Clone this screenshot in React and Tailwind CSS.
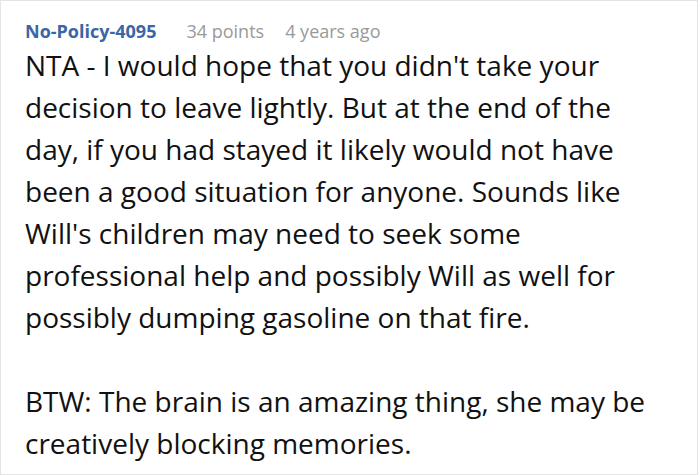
import React from 'react';

export default function App() {
  return (
    <div className="w-[698px] h-[475px] bg-white border border-[#e4e4e4] overflow-hidden" style={{ fontFamily: '"Open Sans", "Noto Sans", sans-serif' }}>
      <div className="pl-[24px] pr-4 pt-[17px]">
        <div className="flex items-baseline text-[18px] leading-[26px]">
          <span className="font-bold text-[#3b66a6]">No-Policy-4095</span>
          <span className="ml-[30px] text-[#999999]">34 points</span>
          <span className="ml-[21px] text-[#999999]">4 years ago</span>
        </div>
        <div className="text-[28px] leading-[42px] text-[#111111]">
          <p>
            NTA - I would hope that you didn't take your
            <br />
            decision to leave lightly. But at the end of the
            <br />
            day, if you had stayed it likely would not have
            <br />
            been a good situation for anyone. Sounds like
            <br />
            Will's children may need to seek some
            <br />
            professional help and possibly Will as well for
            <br />
            possibly dumping gasoline on that fire.
          </p>
          <p className="mt-[42px]">
            BTW: The brain is an amazing thing, she may be
            <br />
            creatively blocking memories.
          </p>
        </div>
      </div>
    </div>
  );
}
